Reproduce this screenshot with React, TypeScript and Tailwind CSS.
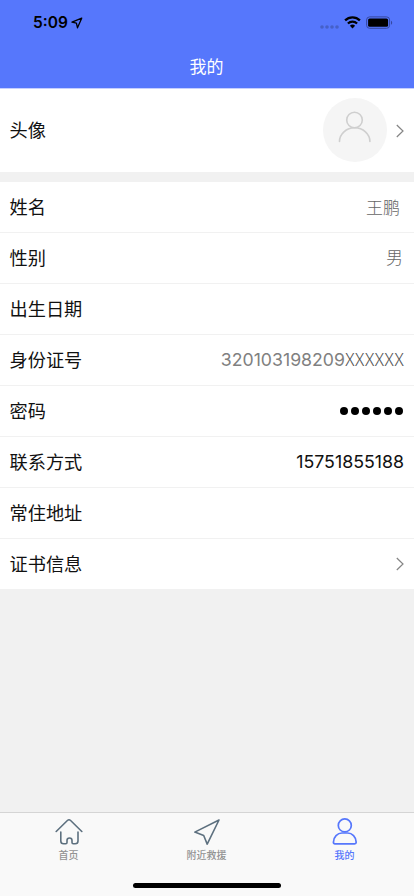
import type { ReactNode } from 'react'
import clsx from 'clsx'

const fontClass = "font-[Inter,'Noto_Sans_CJK_SC',sans-serif]"

function Chevron() {
  return (
    <svg width="8" height="14" viewBox="0 0 8 14" fill="none" stroke="#858585" strokeWidth="1.2">
      <path d="M.8 1 7 7 .8 13" />
    </svg>
  )
}

function StatusBar() {
  return (
    <div className="flex h-11 items-start justify-between pl-[33px] pr-[21px] text-black">
      <div className="flex items-center pt-[14px]">
        <span className="text-[15.5px] leading-[18px] font-semibold">5:09</span>
        <svg className="ml-[3px]" width="12" height="12" viewBox="0 0 12 12" fill="none" stroke="#000" strokeWidth="1.3" strokeLinejoin="round">
          <path d="M10.7 1.2 1 5.2l4.4 1 1.1 4.6z" />
        </svg>
      </div>
      <div className="flex items-start pt-4">
        <svg className="mt-[9px]" width="20" height="4" viewBox="0 0 20 4" fill="#4560c8">
          <circle cx="2" cy="2" r="1.8" />
          <circle cx="7" cy="2" r="1.8" />
          <circle cx="12" cy="2" r="1.8" />
          <circle cx="17" cy="2" r="1.8" />
        </svg>
        <svg className="ml-1" width="17" height="13" viewBox="0 0 17 13" fill="none" stroke="#000">
          <path d="M1.1 4.4a10.6 10.6 0 0 1 14.8 0" strokeWidth="2.3" />
          <path d="M3.9 7.5a6.6 6.6 0 0 1 9.2 0" strokeWidth="2.2" />
          <path d="M8.5 12.4 5.9 9.8a3.8 3.8 0 0 1 5.2 0z" fill="#000" stroke="none" />
        </svg>
        <svg className="ml-[5px]" width="27" height="13" viewBox="0 0 27 13">
          <rect x=".6" y=".9" width="23" height="11.4" rx="3" fill="none" stroke="#3548a0" />
          <rect x="2.1" y="2.4" width="20" height="8.4" rx="1.6" />
          <path d="M25 4.8v4c1.6-.7 1.6-3.3 0-4z" fill="#3548a0" />
        </svg>
      </div>
    </div>
  )
}

function Row({ label, children, last }: { label: string; children?: ReactNode; last?: boolean }) {
  return (
    <li
      className={clsx(
        'flex items-center justify-between bg-white pl-[9.5px] pr-[10px]',
        last ? 'h-[50px]' : 'h-[51px] border-b border-[#f1f1f1]',
      )}
    >
      <span className="text-[18.2px] leading-6 text-[#111]">{label}</span>
      {children}
    </li>
  )
}

function Tab({ label, active, children }: { label: string; active?: boolean; children: ReactNode }) {
  return (
    <div className={clsx('flex flex-1 flex-col items-center pt-[5px]', active ? 'text-[#5677fc]' : 'text-[#929292]')}>
      {children}
      <span className="mt-[2px] mr-px text-[10px] leading-[14px] font-medium">{label}</span>
    </div>
  )
}

export default function App() {
  return (
    <div className={clsx('flex h-[896px] w-[414px] flex-col bg-[#f1f1f1]', fontClass)}>
      <header className="h-[89px] border-b border-[#c5cfff] bg-[#5677fc]">
        <StatusBar />
        <h1 className="pt-[2px] pr-px text-center text-[17px] leading-[42px] font-normal text-white">我的</h1>
      </header>

      <section className="flex h-[83px] items-center justify-between bg-white pl-[9.5px] pr-[10px]">
        <span className="pb-[2px] text-[18.2px] leading-6 text-[#111]">头像</span>
        <div className="flex items-center">
          <svg className="mr-[9px] mb-px" width="64" height="64" viewBox="0 0 64 64" fill="none" stroke="#cfcfcf" strokeWidth="1.6">
            <circle cx="32" cy="32" r="32" fill="#f5f5f5" stroke="none" />
            <circle cx="31.5" cy="22" r="7.8" />
            <path d="M16.5 43.5a15.2 13.7 0 0 1 30.4 0" strokeLinecap="round" />
          </svg>
          <Chevron />
        </div>
      </section>

      <ul className="mt-[10px]">
        <Row label="姓名">
          <span className="mr-1 pt-[3px] text-[17px] font-light text-[#666]">王鹏</span>
        </Row>
        <Row label="性别">
          <span className="mr-px pt-[2px] text-[17px] font-light text-[#666]">男</span>
        </Row>
        <Row label="出生日期" />
        <Row label="身份证号">
          <span className="flex items-center text-[17.7px] text-[#808080]">
            320103198209
            <span className="mb-[5px] font-['Noto_Sans_CJK_SC',sans-serif] text-[18px] leading-6 font-light tracking-[0.1px] text-[#555]">
              XXXXXX
            </span>
          </span>
        </Row>
        <Row label="密码">
          <span className="mr-px flex gap-[3px]">
            {[0, 1, 2, 3, 4, 5].map((dot) => (
              <span key={dot} className="size-2 rounded-full bg-black" />
            ))}
          </span>
        </Row>
        <Row label="联系方式">
          <span className="text-[17.8px] text-[#111]">15751855188</span>
        </Row>
        <Row label="常住地址" />
        <Row label="证书信息" last>
          <Chevron />
        </Row>
      </ul>

      <nav className="relative mt-auto flex h-[84px] border-t border-[#d5d5d5] bg-[#f9f9f9]">
        <Tab label="首页">
          <svg width="28" height="28" viewBox="0 0 28 28" fill="none" stroke="#5d707f" strokeWidth="1.6" strokeLinecap="round" strokeLinejoin="round">
            <path d="M1.2 13.5 12.4 2.5q1.6-1.5 3.2 0l11.2 11" />
            <path d="M5.8 14v9q0 2.8 2.8 2.8h2.2q1.2 0 1.2-1.2v-2.1a2.5 2.5 0 0 1 5 0v2.1q0 1.2 1.2 1.2h2q2.8 0 2.8-2.8v-9" />
          </svg>
        </Tab>
        <Tab label="附近救援">
          <svg width="28" height="28" viewBox="0 0 28 28" fill="none" stroke="#5d707f" strokeWidth="1.6" strokeLinejoin="round">
            <path d="M26 2 1.8 14.1l8.9 3.4 3.5 8.6z" />
          </svg>
        </Tab>
        <Tab label="我的" active>
          <svg width="28" height="28" viewBox="0 0 28 28" fill="none" stroke="currentColor" strokeWidth="1.7">
            <circle cx="13.8" cy="7.4" r="6.5" />
            <path d="M4 25.9q-1.6 0-1.6-1.6C2.4 18.8 6.6 15 11 15h5.6c4.4 0 8.6 3.8 8.6 9.3q0 1.6-1.6 1.6z" />
          </svg>
        </Tab>
        <div className="absolute bottom-2 left-[133px] h-[5px] w-[148px] rounded-full bg-black" />
      </nav>
    </div>
  )
}
